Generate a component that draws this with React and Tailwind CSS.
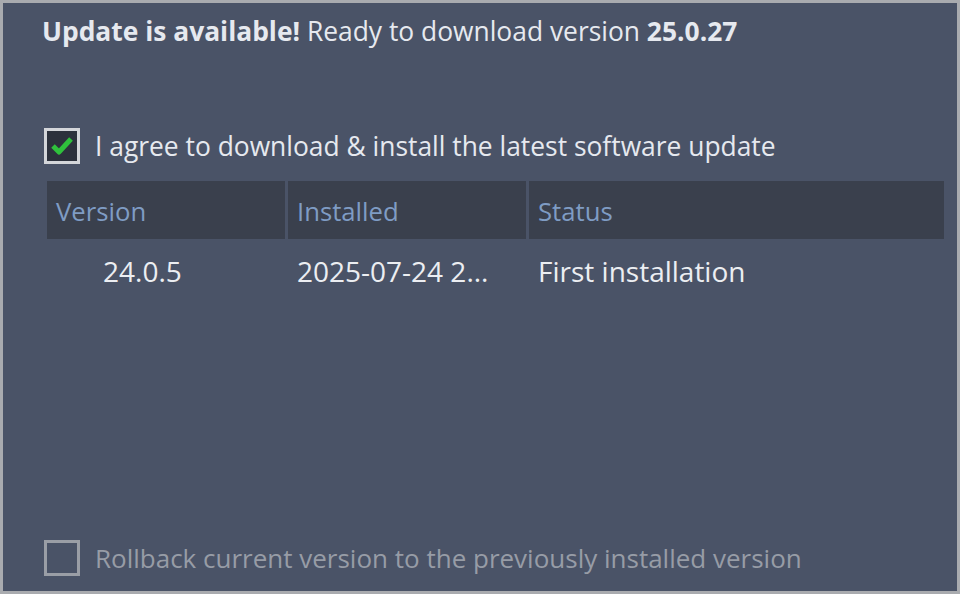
import React from 'react';

const font = { fontFamily: '"Open Sans", "Noto Sans", sans-serif' };

const Check = ({ checked, disabled }) => (
    <div
        className={`w-[36px] h-[36px] shrink-0 border-[3px] flex items-center justify-center ${disabled ? 'border-[#9a9ea6] bg-[#4a5367]' : 'border-[#d4d6da] bg-[#2c313c]'}`}
    >
        {checked && (
            <svg width="22" height="20" viewBox="0 0 22 20">
                <path d="M2 10 L8 16 L20 3" fill="none" stroke="#2fc13c" strokeWidth="5" strokeLinejoin="round" />
            </svg>
        )}
    </div>
);

const App = () => {
    return (
        <div className="w-[960px] h-[594px] bg-[#a9abaf] p-[3px]" style={font}>
            <div className="w-full h-full bg-[#4a5367] flex flex-col pl-[39px] pr-[13px] text-[#e6e9ef]">
                <div className="pt-[10px] text-[26.4px] leading-[36px] whitespace-nowrap">
                    <span className="font-bold">Update is available!</span> Ready to download version <span className="font-bold">25.0.27</span>
                </div>

                <div className="mt-[79px] flex items-center gap-[15px] pl-[2px]">
                    <Check checked />
                    <span className="text-[26.4px] leading-[36px] whitespace-nowrap">I agree to download &amp; install the latest software update</span>
                </div>

                <div className="mt-[17px] ml-[5px]">
                    <div className="flex h-[58px] gap-[3px] text-[25.7px] text-[#7f9cc4]">
                        <div className="w-[238px] bg-[#3a404d] flex items-center pl-[9px] pt-[5px]">Version</div>
                        <div className="w-[238px] bg-[#3a404d] flex items-center pl-[9px] pt-[5px]">Installed</div>
                        <div className="flex-1 bg-[#3a404d] flex items-center pl-[9px] pt-[5px]">Status</div>
                    </div>
                    <div className="flex h-[64px] gap-[3px] text-[28px] text-[#eceef2] whitespace-nowrap">
                        <div className="w-[238px] flex items-center pl-[56px]">24.0.5</div>
                        <div className="w-[238px] flex items-center pl-[9px]">2025-07-24 2...</div>
                        <div className="flex-1 flex items-center pl-[9px]">First installation</div>
                    </div>
                </div>

                <div className="mt-auto mb-[15px] flex items-center gap-[15px] pl-[2px]">
                    <Check disabled />
                    <span className="text-[26px] leading-[36px] text-[#979ca6] whitespace-nowrap">Rollback current version to the previously installed version</span>
                </div>
            </div>
        </div>
    );
};

export default App;
